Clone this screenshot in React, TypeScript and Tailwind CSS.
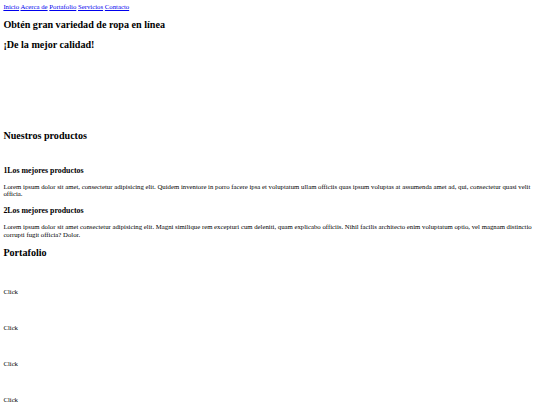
import React from "react";

export default function App() {
  const items = [1, 2, 3, 4];
  return (
    <div className="[zoom:0.421875] bg-white text-black text-[16px] leading-[18.4px] font-['Liberation_Serif','Times_New_Roman',serif]">
      <div className="m-[8px]">
        <nav>
          <a href="#" className="text-[#0000ee] underline">Inicio</a>{" "}
          <a href="#" className="text-[#0000ee] underline">Acerca de</a>{" "}
          <a href="#" className="text-[#0000ee] underline">Portafolio</a>{" "}
          <a href="#" className="text-[#0000ee] underline">Servicios</a>{" "}
          <a href="#" className="text-[#0000ee] underline">Contacto</a>
        </nav>
        <h2 className="text-[24px] leading-[27.6px] font-bold mt-[18px] mb-[19.92px]">Obtén gran variedad de ropa en línea</h2>
        <h2 className="text-[24px] leading-[27.6px] font-bold my-[19.92px]">¡De la mejor calidad!</h2>
        <div className="h-[150px]"></div>
        <h2 className="text-[24px] leading-[27.6px] font-bold my-[19.92px]">Nuestros productos</h2>
        <div className="h-[17px]"></div>
        <h3 className="text-[18.72px] leading-[21.5px] font-bold my-[18.72px]">1Los mejores productos</h3>
        <p className="my-[16px]">
          Lorem ipsum dolor sit amet, consectetur adipisicing elit. Quidem inventore in porro facere ipsa et voluptatum ullam officiis quas ipsum voluptas at assumenda amet ad, qui, consectetur quasi velit officia.
        </p>
        <h3 className="text-[18.72px] leading-[21.5px] font-bold my-[18.72px]">2Los mejores productos</h3>
        <p className="my-[16px]">
          Lorem ipsum dolor sit amet consectetur adipisicing elit. Magni similique rem excepturi cum deleniti, quam explicabo officiis. Nihil facilis architecto enim voluptatum optio, vel magnam distinctio corrupti fugit officia? Dolor.
        </p>
        <h2 className="text-[24px] leading-[27.6px] font-bold my-[19.92px]">Portafolio</h2>
        {items.map((i) => (
          <div key={i}>
            <div className="h-[35px]"></div>
            <p className="my-[16px]">Click</p>
          </div>
        ))}
      </div>
    </div>
  );
}
